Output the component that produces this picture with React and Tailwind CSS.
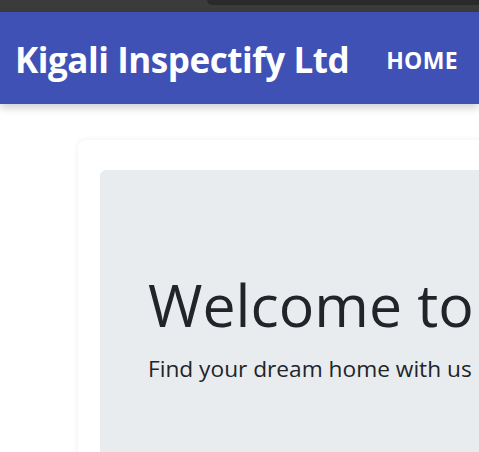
export default function App() {
  return (
    <div className="w-full h-[452px] overflow-hidden bg-white" style={{ fontFamily: '"Open Sans", "Noto Sans", sans-serif' }}>
      <div className="h-[12px] bg-[#3b3b3b] flex">
        <div className="ml-[207px] flex-1 h-[5px] bg-[#2a2a2a] rounded-bl-[10px]" />
      </div>
      <nav className="relative z-10 h-[92px] bg-[#3f51b5] flex items-center pl-[15px] pt-[4px] shadow-[0_4px_8px_rgba(0,0,0,0.18)]">
        <span className="text-white font-bold text-[35px] tracking-[-0.45px] whitespace-nowrap">Kigali Inspectify Ltd</span>
        <span className="ml-[37px] text-white font-bold text-[23px] tracking-[0.3px] whitespace-nowrap">HOME</span>
      </nav>
      <div className="ml-[78px] mt-[36px] w-[600px] h-[400px] bg-white rounded-lg shadow-[0_0_6px_rgba(0,0,0,0.07)] pt-[30px] pl-[22px]">
        <div className="bg-[#e9ecef] rounded-md h-[400px] pl-[48px] pt-[99px] text-[#212529]">
          <h1 className="text-[59px] leading-[1.2] whitespace-nowrap">Welcome to Kigali Inspectify</h1>
          <p className="text-[22.7px] mt-[12px] whitespace-nowrap">Find your dream home with us</p>
        </div>
      </div>
    </div>
  );
}
